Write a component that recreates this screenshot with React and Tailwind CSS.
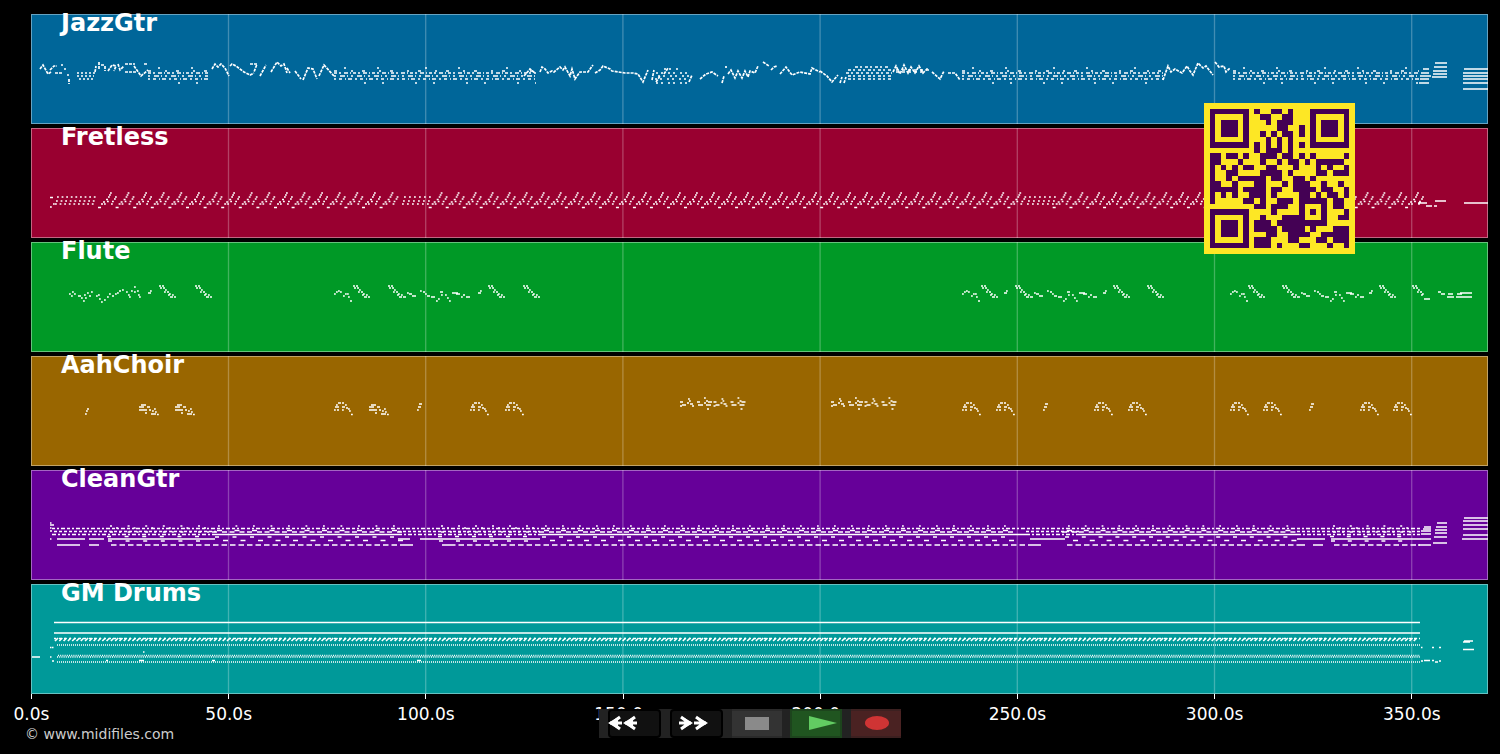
// Notes are stored in sheet coordinates, every track shows its own slice of the sheet
const SHEET_LEFT = 31;
const SHEET_WIDTH = 1457;
const TRACK_HEIGHT = 110;
const MARK_GAP = 197.2;
const MARKS = ['0.0s', '50.0s', '100.0s', '150.0s', '200.0s', '250.0s', '300.0s', '350.0s'];

// path of short notes: [x, y, length]
const dots = (list, dx = 0) => list.map(([x, y, w = 1.8]) => `M${x + dx} ${y}h${w}`).join('');

// same motif played from several start points
const repeat = (motif, starts) => starts.map((x) => dots(motif, x)).join('');

const every = (from, to, step) => {
    const out = [];
    for (let x = from; x <= to; x += step) out.push(x);
    return out;
};

// horizontal lines: [x1, x2, y]
const lines = (list) => list.map(([a, b, y]) => `M${a} ${y}H${b}`).join('');

/* ---------- JazzGtr ---------- */

const jazzMelody = [
    'M40 69L43 65L48 74L51 72', 'M50 70L54 66L57 66', 'M61 65h2M64 69h2M55 73h8M67 75h2M69 79v5',
    'M95 72L96 66M99 62v8M101 65h3M105 66v5M108 71L112 65L116 66L114 71',
    'M118 64L120 70L124 66M125 64h10M125 72h11M134 66L141 76L148 70M144 64h4',
    'M212 69L215 64L218 67L221 64L225 68L229 76M230 66L232 64L236 66L240 69L244 72L250 75L254 73',
    'M250 64h7L254 72M260 76L266 65M271 72L277 62L281 66L284 64L287 73',
    'M287 68L290 73M295 71L301 79M303 80L308 68L313 69L317 79M319 76L324 65L334 76',
    'M524 76L530 69L535 73M540 72L542 67L545 69L548 73L552 71L554 72L560 67L563 70L565 67L570 76L572 69L575 79L580 72L588 72L593 65',
    'M595 73L600 70L603 66L610 69L612 71L625 73L633 73L638 74L643 82L648 70',
    'M652 80L654 70M656 82L660 76M664 74L668 68M689 82L692 75M700 79L706 74L712 72L718 76M722 83L724 76M726 66v2',
    'M728 74L731 70L735 78L738 71L742 78L745 71L748 77L750 71L755 73L758 66M763 62L769 66M771 70L774 67L777 66',
    'M780 74L786 67L792 75L800 72L810 74L812 68L820 72M820 71L827 76L832 82L838 75M840 83L842 77M844 83L846 77',
    'M893 72L896 66L900 74L904 65L908 73L911 67L915 73L919 66L923 73L928 68',
    'M932 72L940 79L944 71M948 73L955 73L960 80',
    'M1163 80L1168 66L1171 72L1175 69L1182 73L1187 66L1190 71L1193 75L1198 63L1203 68L1206 66L1213 75',
    'M1215 62L1219 67L1224 66L1226 72L1230 68',
].join('');

const jazzBands = [[148, 208], [334, 536], [962, 1163], [1233, 1419]];

const jazzChords = lines([
    [1423, 1429, 69], [1421, 1429, 73], [1420, 1431, 76], [1420, 1429, 79], [1419, 1429, 83],
    [1435, 1447, 63], [1434, 1447, 67], [1433, 1447, 71], [1433, 1447, 74], [1432, 1447, 77],
    [1464, 1488, 69], [1463, 1488, 73], [1463, 1488, 76], [1463, 1488, 79], [1463, 1488, 83], [1463, 1488, 89],
]);

/* ---------- Fretless ---------- */

const bassRise = [
    [-13, 207.5, 3], [-10, 204, 2], [-8, 202, 2], [-7, 204], [-5, 199.5, 2], [-4, 201.5], [-3, 197], [-2, 195], [-1, 193],
    [0, 204], [1, 201.5], [3, 199], [4, 197],
];
const bassFlat = [[0, 204], [1, 201], [2, 197]];

const fretless = [
    'M50 197.5h3M50 207h1.8M53 204h1.8',
    repeat(bassFlat, every(55, 96, 4.6)),
    repeat(bassRise, every(111, 394, 17.6)),
    repeat(bassFlat, every(402, 428, 5)),
    repeat(bassRise, every(441.7, 1021, 17.02)),
    repeat(bassFlat, every(1027, 1053, 5)),
    repeat(bassRise, every(1065.7, 1419, 16.78)),
    lines([[1418, 1427, 203], [1426, 1432, 206], [1434, 1437, 206], [1435, 1446, 201], [1464, 1488, 203]]),
].join('');

/* ---------- Flute ---------- */

const fluteFall = [[0, 286, 2], [3, 286, 2], [1, 288, 2], [4, 288, 2], [6, 290], [5, 292], [8, 292, 2], [10, 294], [9, 295], [11, 297, 3], [13, 295], [15, 297, 2]];
const fluteTurn = [[0, 294], [2, 292], [4, 291], [6, 292], [9, 296], [11, 294], [13, 294], [14, 297], [16, 301, 2]];
const flutePhrase = [
    [15, 297, 3], [19, 293], [21, 294, 3], [24, 296, 4], [32, 291], [35, 292, 2], [37, 294], [39, 296, 3], [43, 297, 4],
    [48, 301], [50, 299], [52, 292, 3], [53, 295], [57, 295], [59, 298], [61, 301], [64, 293, 6], [68, 294, 4], [73, 297],
    [75, 295, 2], [78, 297, 4],
];
const fluteIntro = [
    [69, 294], [71, 296], [72, 292], [74, 294], [78, 296, 3], [81, 298], [83, 301], [85, 298], [84, 295], [87, 293], [89, 296, 2],
    [91, 292], [96, 296], [98, 295], [99, 299], [101, 302], [104, 300], [107, 297], [109, 294], [112, 296, 2], [115, 294],
    [117, 293], [119, 291, 2], [122, 290], [126, 292], [128, 295], [129, 297], [131, 291], [134, 287], [134, 292], [137, 291],
    [138, 295], [139, 297], [148, 293, 3], [150, 291],
];

const flute = [
    dots(fluteIntro),
    repeat(fluteFall, [159, 195, 353, 388, 488, 523, 981, 1015, 1113, 1147, 1248, 1282, 1379]),
    repeat(fluteFall.slice(0, 9), [1412]),
    repeat(fluteTurn, [334, 962, 1230]),
    repeat(flutePhrase, [388, 1015, 1282]),
    repeat([[0, 293, 3], [2, 291]], [478, 1004, 1103, 1369]),
    lines([[1424, 1430, 299], [1438, 1441, 292], [1441, 1445, 294], [1447, 1454, 297], [1448, 1453, 294], [1456, 1462, 297], [1457, 1462, 294], [1460, 1472, 293], [1460, 1472, 297]]),
].join('');

/* ---------- AahChoir ---------- */

const choirArch = [[0, 410], [1, 407, 4], [2, 405], [4, 403, 3], [8, 403, 2], [8, 407, 3], [3, 410, 2], [8, 410], [11, 405], [12, 408, 2], [14, 409], [15, 411], [17, 414.5]];
const choirStack = [[0, 407, 5], [0, 410, 8], [2, 405, 5], [8, 407, 3], [6, 413, 2], [10, 410, 2], [12, 414, 5], [13, 411], [15, 409], [16, 412], [18, 414.5]];
const choirWave = [
    [0, 402, 3], [2, 405, 4], [0, 406, 2], [7, 403, 2], [8, 399], [9, 401], [10, 404, 3], [12, 406, 2],
    [17, 402, 3], [18, 405, 5], [24, 403, 2], [24, 398], [26, 401, 2], [26, 405, 5], [28, 402, 4], [27, 409, 2],
];

const choir = [
    repeat([[0, 414], [1, 411], [2, 409, 2]], [85]),
    repeat(choirStack, [139, 175, 369]),
    repeat(choirArch, [334, 470, 505, 962, 996, 1094, 1128, 1230, 1263, 1360, 1393]),
    repeat([[0, 410], [1, 407, 3], [2, 404, 3]], [417, 1043, 1309]),
    repeat(choirWave, [680, 713.5, 831, 864.5]),
].join('');

/* ---------- CleanGtr ---------- */

const cleanStart = lines([[50, 51.5, 523], [50, 54, 525], [50, 51.5, 528], [50, 52, 531], [50, 51.5, 539]]);
const cleanLow = lines([[57, 80, 545], [89, 99, 545], [402, 413, 545], [442, 450, 545], [1033, 1041, 545], [1297, 1305, 545], [1313, 1323, 545]]);
const cleanHold = lines([[57, 85, 539], [89, 104, 539], [108, 215, 539], [398, 410, 539], [420, 540, 539], [1030, 1065, 539], [1297, 1325, 539], [1331, 1420, 539]]);
const cleanSustain = lines([[216, 398, 534.5], [540, 1026, 534.5], [1080, 1297, 534.5]]);
const cleanBox = [[0, 526, 2], [6, 528, 2], [0, 532, 3], [-3, 536.5, 4], [-2, 541, 4], [9, 532, 2]];
const cleanWave = [[0, 526, 1.8], [-6, 532, 5], [-1, 530.5, 5], [4, 532, 5], [-3, 537, 4], [5, 540.5, 5]];

const cleanChords = lines([
    [1424, 1431, 527], [1423, 1431, 529], [1421, 1431, 531], [1421, 1431, 534], [1420, 1431, 539], [1418, 1431, 545],
    [1437, 1447, 523], [1436, 1447, 527], [1435, 1447, 530], [1435, 1447, 533], [1434, 1447, 537], [1433, 1447, 543],
    [1464, 1488, 518], [1463, 1488, 521], [1463, 1488, 525], [1463, 1488, 529], [1463, 1488, 535], [1462, 1488, 539],
]);

/* ---------- GM Drums ---------- */

const drumTail = lines([
    [32, 40, 657], [50, 51.5, 647.5], [52, 53.5, 647.5], [50, 51.5, 657], [52, 54, 661], [143, 144.5, 652], [139, 144, 660.5],
    [106, 108, 660.5], [212, 215, 660.5], [417, 421, 660.5], [1421, 1422.5, 647.5], [1432, 1434, 647.5], [1439, 1441, 647.5],
    [1421, 1423, 661], [1424, 1430, 660.5], [1432, 1434, 660.5], [1435, 1438, 662], [1439, 1441, 661],
    [1464, 1473, 641], [1463, 1470, 642], [1463, 1474, 649.5],
]);

const TRACKS = [
    {
        name: 'JazzGtr',
        color: 'bg-[#006699]',
        notes: [
            { d: jazzMelody, dash: '3 1' },
            ...jazzBands.flatMap(([a, b]) => [
                { d: `M${a} 73H${b}`, dash: '3 2 2 3 4 2 1 2' },
                { d: `M${a} 76H${b}`, dash: '2 4 5 2 1 3' },
                { d: `M${a} 79H${b}`, dash: '2 3 3 3 1 2 4 3' },
                { d: `M${a} 71H${b}`, dash: '3 14 2 9' },
                { d: `M${a + 30} 83H${b}`, dash: '2 16 2 31' },
                { d: `M${a + 10} 68H${b}`, dash: '2 31 2 46' },
            ]),
            { d: lines([[77, 95, 73], [77, 94, 76], [79, 94, 79]]), dash: '2 2' },
            { d: lines([[656, 692, 73], [658, 690, 76], [655, 690, 79], [656, 688, 83], [664, 680, 69]]), dash: '2 3 2 5' },
            { d: lines([[848, 892, 70], [846, 892, 73], [848, 892, 76], [848, 892, 79], [855, 890, 67]]), dash: '3 2 2 3' },
            { d: lines([[896, 930, 70], [896, 926, 72]]), dash: '3 3' },
            { d: jazzChords },
        ],
    },
    { name: 'Fretless', color: 'bg-[#990030]', notes: [{ d: fretless }] },
    { name: 'Flute', color: 'bg-[#009926]', notes: [{ d: flute }] },
    { name: 'AahChoir', color: 'bg-[#996600]', notes: [{ d: choir }] },
    {
        name: 'CleanGtr',
        color: 'bg-[#660099]',
        notes: [
            { d: cleanStart + cleanLow + cleanHold + cleanSustain + cleanChords },
            { d: 'M52 528.5H1420', dash: '3 2 2 2 4 2' },
            { d: 'M54 531.5H216M398 531.5H540M1026 531.5H1080M1297 531.5H1420', dash: '3 2' },
            { d: 'M52 534.5H216M398 534.5H540M1026 534.5H1080M1297 534.5H1420', dash: '4 2 2 2' },
            { d: 'M111 545H402M450 545H1033M1067 545H1297M1334 545H1420', dash: '5.5 3' },
            { d: repeat(cleanBox, every(110, 200, 17.6)) + repeat(cleanBox, every(441, 530, 17)) + repeat(cleanBox, every(1333, 1415, 16.8)) },
            { d: repeat(cleanWave, every(218, 394, 17.5)) + repeat(cleanWave, every(545, 1020, 17)) + repeat(cleanWave, every(1068, 1290, 16.8)) },
        ],
    },
    {
        name: 'GM Drums',
        color: 'bg-[#009999]',
        notes: [
            { d: 'M54 622.5H1420M54 633H1420' },
            { d: every(55, 1416, 4.3).map((x) => `M${x} 641L${x + 3} 638`).join('') },
            { d: 'M54 638.5H1420', dash: '2 3' },
            { d: 'M57 645H1420', dash: '1 1' },
            { d: 'M58 655.5H1420M57 657H1420', dash: '1 1.2' },
            { d: 'M57 662H1420', dash: '1 1' },
            { d: drumTail },
        ],
    },
];

const QR = [
    '1111111010011010001111111',
    '1000001001100110001000001',
    '1011101000101110001011101',
    '1011101000001100101011101',
    '1011101001010110101011101',
    '1000001000101010001000001',
    '1111111010101010101111111',
    '0000000010111010000000000',
    '1101101001110110101000001',
    '1100010001001011010111110',
    '1010101100110001000101001',
    '1001100001111010000110111',
    '1001011111011001101000000',
    '1100100011000101110010010',
    '1111101111011001111011001',
    '1010100111010000110101101',
    '1000001101001110111110110',
    '0000000011011100100010110',
    '1111111000010000101010001',
    '1000001001000111100010011',
    '1011101011101111111110000',
    '1011101011110111101000111',
    '1011101000110011110011111',
    '1000001011100011000110111',
    '1111111011101000110001001',
];

function QrCode() {
    return (
        <svg
            viewBox="-1 -1 27 27"
            className="absolute top-[103px] right-[145px] size-[151px] bg-[#fde725]"
            shapeRendering="crispEdges"
            role="img"
            aria-label="QR code"
        >
            <path
                fill="#440154"
                d={QR.map((row, y) => [...row].map((c, x) => (c === '1' ? `M${x} ${y}h1v1h-1z` : '')).join('')).join('')}
            />
        </svg>
    );
}

function Track({ track, index }) {
    const top = 14 + index * 114;

    return (
        <section className={`relative h-[110px] ${track.color}`}>
            <svg
                viewBox={`${SHEET_LEFT} ${top} ${SHEET_WIDTH} ${TRACK_HEIGHT}`}
                preserveAspectRatio="none"
                className="block h-full w-full"
                fill="none"
                aria-hidden="true"
            >
                {MARKS.slice(1).map((mark, i) => (
                    <path
                        key={mark}
                        d={`M${SHEET_LEFT + 0.3 + (i + 1) * MARK_GAP} ${top}v${TRACK_HEIGHT}`}
                        stroke="#fff"
                        strokeOpacity="0.26"
                        strokeWidth="1.3"
                    />
                ))}
                {track.notes.map((note, i) => (
                    <path key={i} d={note.d} stroke="#fff" strokeWidth="1.7" strokeDasharray={note.dash} />
                ))}
            </svg>
            <div className="absolute inset-0 border border-white/40" />
            <h2 className="absolute -top-[3px] left-[30px] text-[24px] leading-[24px] font-bold">{track.name}</h2>
        </section>
    );
}

function TimeAxis() {
    return (
        <div className="flex">
            {MARKS.map((mark, i) => (
                <div
                    key={mark}
                    className="shrink-0"
                    style={{ width: i < MARKS.length - 1 ? `${(MARK_GAP / SHEET_WIDTH) * 100}%` : 0 }}
                >
                    <div className="flex w-px flex-col items-center">
                        <div className="h-[5px] w-px bg-white" />
                        <span className="mt-[3px] text-[17px] leading-[24px]">{mark}</span>
                    </div>
                </div>
            ))}
        </div>
    );
}

function Transport() {
    return (
        <div className="absolute top-[709px] left-1/2 flex h-[29px] w-[302px] -translate-x-1/2 justify-between bg-[#222] pl-[9px]">
            <button type="button" aria-label="Rewind" className="w-[53px] rounded-sm border-2 border-black bg-[#111]">
                <svg viewBox="0 0 49 25" className="block h-[25px] w-[49px] overflow-visible" stroke="#fff" strokeWidth="3" fill="none">
                    <path d="M0 12H12M2 12L10 6M2 12L10 18M15 12H27M17 12L25 6M17 12L25 18" />
                    <path d="M-2 12L8 6V18ZM13 12L23 6V18Z" fill="#fff" stroke="none" />
                </svg>
            </button>
            <button type="button" aria-label="Fast forward" className="w-[53px] rounded-sm border-2 border-black bg-[#111]">
                <svg viewBox="0 0 49 25" className="block h-[25px] w-[49px]" stroke="#fff" strokeWidth="3" fill="none">
                    <path d="M7 12H19M9 6L17 12M9 18L17 12M22 12H34M24 6L32 12M24 18L32 12" />
                    <path d="M21 12L11 6L14 12L11 18ZM36 12L26 6L29 12L26 18Z" fill="#fff" stroke="none" />
                </svg>
            </button>
            <button type="button" aria-label="Stop" className="w-[50px] border-y-2 border-[#2a2a2a] bg-[#333]">
                <svg viewBox="0 0 50 25" className="block h-[25px] w-[50px]">
                    <rect x="13" y="6" width="24" height="13" fill="#8a8a8a" />
                </svg>
            </button>
            <button type="button" aria-label="Play" className="w-[52px] border-2 border-[#1d441d] bg-[#205520]">
                <svg viewBox="0 0 48 25" className="block h-[25px] w-[48px]">
                    <path d="M17 5L45 12L17 19Z" fill="#62cc62" />
                </svg>
            </button>
            <button type="button" aria-label="Record" className="w-[50px] border-y-2 border-[#3c2020] bg-[#4a2222]">
                <svg viewBox="0 0 50 25" className="block h-[25px] w-[50px]">
                    <ellipse cx="26" cy="12" rx="12" ry="7" fill="#cf3434" />
                </svg>
            </button>
        </div>
    );
}

export default function App() {
    return (
        <main className="relative min-h-screen overflow-hidden bg-black font-['DejaVu_Sans',sans-serif] text-white">
            <div className="mr-3 ml-[31px] pt-[14px]">
                <div className="flex flex-col gap-1">
                    {TRACKS.map((track, i) => (
                        <Track key={track.name} track={track} index={i} />
                    ))}
                </div>
                <TimeAxis />
            </div>
            <footer className="ml-[25px] text-[14px] leading-[16px] text-[#ccc]">© www.midifiles.com</footer>
            <QrCode />
            <Transport />
        </main>
    );
}
